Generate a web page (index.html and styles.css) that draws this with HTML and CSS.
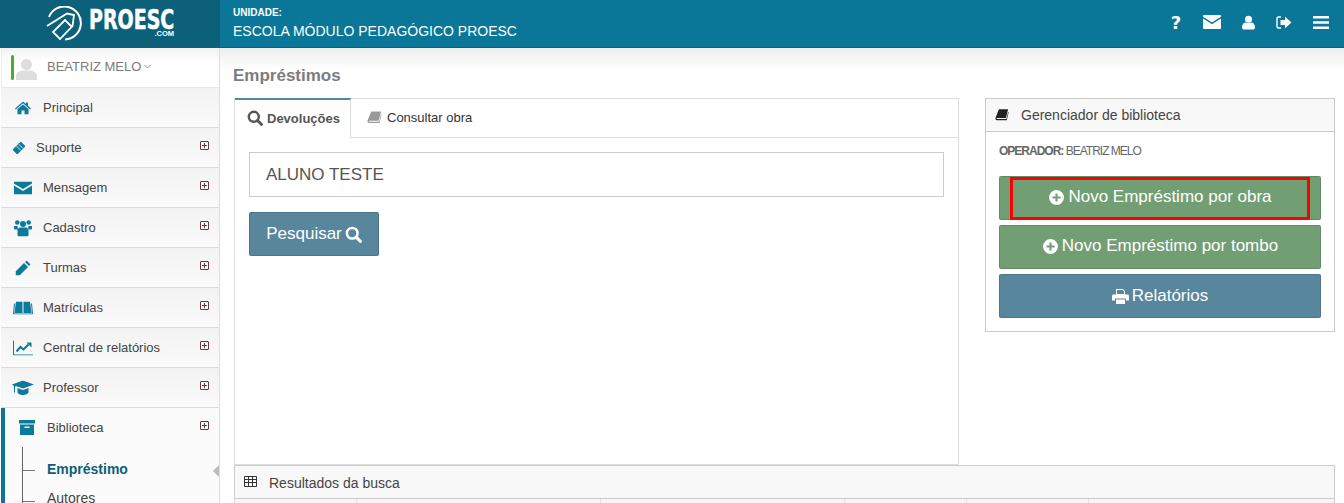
FILE: index.html
```html
<!DOCTYPE html>
<html lang="pt">
<head>
<meta charset="utf-8">
<title>Empréstimos</title>
<link rel="stylesheet" href="styles.css">
</head>
<body>
<svg class="defs" width="0" height="0" aria-hidden="true">
  <symbol id="i-search" viewBox="0 0 16 16"><circle cx="6.8" cy="6.8" r="5" fill="none" stroke="currentColor" stroke-width="2.4"/><path d="M10.5 10.5l4 4" stroke="currentColor" stroke-width="2.8" stroke-linecap="round"/></symbol>
  <symbol id="i-plus" viewBox="0 0 16 16"><path fill-rule="evenodd" d="M8 1a7 7 0 1 1 0 14A7 7 0 0 1 8 1zM7 4.2v2.8H4.2v2H7v2.8h2V9h2.8V7H9V4.2z"/></symbol>
  <symbol id="i-book" viewBox="0 0 16 16"><path d="M4.5 1.5H15l-2.6 10H2.6c-.8 0-1 .9-.3 1h10.600l2.100-8 .6.400-2.200 9H2.200C.8 13.900.2 12.600.6 11.200z"/></symbol>
  <symbol id="i-plusbox" viewBox="0 0 9 9"><path fill="none" stroke="#5c3a3a" d="M1 .5h7c.3 0 .5.200.5.500v7c0 .3-.2.500-.5.500H1C.7 8.500.5 8.300.5 8V1C.5.700.7.500 1 .5zM4.500 2v5M2 4.500h5"/></symbol>
</svg>
<header class="topbar">
  <div class="brand">
    <svg class="logo" viewBox="0 0 36 36" width="36" height="36"><path d="M3 11A16.500 16.500 0 1 1 19 33.500" fill="none" stroke="#fff" stroke-width="2"/><path d="M1 20L21 7.500l7 1.500-1.500 11L14 33l-7-7 12-12 7 7" fill="none" stroke="#fff" stroke-width="1.800"/></svg>
    <div class="wordmark"><span class="wm-main">PROESC</span><span class="wm-sub">.COM</span></div>
  </div>
  <div class="unit">
    <div class="unit-label">UNIDADE:</div>
    <div class="unit-name">ESCOLA MÓDULO PEDAGÓGICO PROESC</div>
  </div>
  <nav class="top-icons">
    <span class="q">?</span>
    <svg width="18" height="14" viewBox="0 0 18 14"><path fill="#fff" d="M1 0h16c.6 0 1 .4 1 1v.8L9 7.600 0 1.800V1c0-.6.4-1 1-1zM0 3.600l9 5.700 9-5.700V13c0 .6-.4 1-1 1H1c-.6 0-1-.4-1-1z"/></svg>
    <svg width="13" height="15" viewBox="0 0 14 15"><circle cx="7" cy="4" r="3.800" fill="#fff"/><path fill="#fff" d="M0 12.500C0 9.500 2 7.500 4 7.500c1 .8 5 .8 6 0 2 0 4 2 4 5 0 1.500-1 2.500-2 2.500H2c-1 0-2-1-2-2.500z"/></svg>
    <svg width="16" height="13" viewBox="0 0 16 13"><path fill="none" stroke="#fff" stroke-width="1.400" d="M5 1H2.500C1.500 1 1 1.600 1 2.500v8c0 .9.500 1.500 1.500 1.500H5"/><path fill="#fff" d="M4.500 4H9V.8l6.500 5.700L9 12.200V9H4.500z"/></svg>
    <svg width="16" height="13" viewBox="0 0 16 13"><path fill="#fff" d="M0 0h16v2.600H0zM0 5.200h16v2.600H0zM0 10.400h16V13H0z"/></svg>
  </nav>
</header>
<div class="shell">
  <aside class="sidebar">
    <div class="user">
      <span class="user-bar"></span>
      <svg class="avatar" width="21" height="21" viewBox="0 0 21 21"><circle cx="10.500" cy="5.500" r="5.500" fill="#ddd"/><path fill="#ddd" d="M0 21v-4c0-3 3-5 6-5.500h9c3 .5 6 2.500 6 5.500v4z"/></svg>
      <span class="user-name">BEATRIZ MELO</span>
      <svg class="chev" width="7" height="5" viewBox="0 0 7 5"><path d="M.5 1l3 3 3-3" fill="none" stroke="#888"/></svg>
    </div>
    <ul class="menu">
      <li class="item"><svg class="mi" width="16" height="13" viewBox="0 0 16 13"><path fill="#0b7a9b" d="M8 0l3 2.600V1h2v3.300l3 2.700-.8.900L8 1.700.8 7.900 0 7zM2.500 7.500L8 3l5.500 4.500V13H9.500V9h-3v4h-4z"/></svg><span>Principal</span></li>
      <li class="item item-narrow"><svg class="mi" width="13" height="13" viewBox="1 1 11 11"><path fill="#0b7a9b" d="M8 1l4 4-7 7-4-4z"/><path stroke="#f6f6f6" stroke-width=".8" d="M4.500 5L8 8.500M6.500 3.500L10 7"/></svg><span>Suporte</span><svg class="plus" width="9" height="9"><use href="#i-plusbox"/></svg></li>
      <li class="item"><svg class="mi" width="18" height="13" viewBox="0 0 18 13"><path fill="#0b7a9b" d="M0 0h18v2L9 7.500 0 2zM0 4l9 5.500L18 4v9H0z"/></svg><span>Mensagem</span><svg class="plus" width="9" height="9"><use href="#i-plusbox"/></svg></li>
      <li class="item"><svg class="mi" width="18" height="17" viewBox="0 0 18 17"><g fill="#0b7a9b"><circle cx="3.300" cy="3" r="2.300"/><circle cx="14.700" cy="3" r="2.300"/><circle cx="9" cy="4.500" r="3"/><path d="M0 6.500h3.500L4 10H1a1 1 0 0 1-1-1zM18 6.500h-3.500L14 10h3a1 1 0 0 0 1-1zM3.500 9.500l2-1.500h7l2 1.500v6c0 .800-.7 1.500-1.500 1.500H5c-.8 0-1.500-.7-1.500-1.500z"/></g></svg><span>Cadastro</span><svg class="plus" width="9" height="9"><use href="#i-plusbox"/></svg></li>
      <li class="item"><svg class="mi" width="15" height="15" viewBox="0 0 15 15"><path fill="#0b7a9b" d="M11 0l4 4-1.500 1.500-4-4zM8.500 2.500l4 4L4 15H0v-4z"/></svg><span>Turmas</span><svg class="plus" width="9" height="9"><use href="#i-plusbox"/></svg></li>
      <li class="item"><svg class="mi" width="20" height="13" viewBox="0 0 20 13"><path fill="#0b7a9b" d="M3 0h6.500v11.500H1.500zM10.500 0H17l1.500 11.500h-8z"/><path fill="none" stroke="#0b7a9b" d="M1.500 2L.5 12.500H19.500L18.500 2"/></svg><span>Matrículas</span><svg class="plus" width="9" height="9"><use href="#i-plusbox"/></svg></li>
      <li class="item"><svg class="mi" width="20" height="15" viewBox="0 0 20 15"><path fill="none" stroke="#0b7a9b" d="M.5 0v14.500H20"/><path fill="none" stroke="#0b7a9b" stroke-width="2" d="M3.500 11l4-4.500 3 2.500 5-5"/><path fill="#0b7a9b" d="M13.500 2h5v5z"/></svg><span>Central de relatórios</span><svg class="plus" width="9" height="9"><use href="#i-plusbox"/></svg></li>
      <li class="item"><svg class="mi" width="22" height="15" viewBox="0 0 22 15"><path fill="#0b7a9b" d="M11 0l11 4-11 4-7-2.500L12 4 3 6v6H2V5.500L0 4zM5.500 7.500L11 9.500l5.500-2v4c0 2-3 3-5.500 3s-5.500-1-5.500-3z"/></svg><span>Professor</span><svg class="plus" width="9" height="9"><use href="#i-plusbox"/></svg></li>
      <li class="item-open">
        <div class="open-row"><svg class="mi-open" width="16" height="15" viewBox="0 0 16 15"><path fill="#0b7a9b" d="M0 0h16v3.500H0zM1 4.500h14V15H1zM5.500 6.500v1.500h5V6.500z"/></svg><span>Biblioteca</span><svg class="plus" width="9" height="9"><use href="#i-plusbox"/></svg></div>
        <ul class="submenu">
          <li class="sub sub-active">Empréstimo</li>
          <li class="sub sub-next">Autores</li>
        </ul>
      </li>
    </ul>
    <span class="caret"></span>
  </aside>
  <main class="content">
    <h1 class="page-title">Empréstimos</h1>
    <div class="columns">
      <section class="tabs">
        <div class="tab-bar">
          <div class="tab tab-active"><svg width="16" height="16"><use href="#i-search"/></svg>Devoluções</div>
          <div class="tab tab-plain"><svg class="tab-book" width="15" height="15" fill="#999"><use href="#i-book"/></svg>Consultar obra</div>
        </div>
        <div class="tab-body">
          <div class="field">ALUNO TESTE</div>
          <button class="btn btn-blue btn-search">Pesquisar <svg width="17" height="17"><use href="#i-search"/></svg></button>
        </div>
      </section>
      <section class="panel">
        <div class="panel-head"><svg width="14" height="14" fill="#222"><use href="#i-book"/></svg><span>Gerenciador de biblioteca</span></div>
        <div class="panel-body">
          <p class="operator"><b>OPERADOR:</b> BEATRIZ MELO</p>
          <div class="btn-stack">
            <button class="btn btn-green"><svg width="17" height="17" fill="#fff"><use href="#i-plus"/></svg> Novo Empréstimo por obra<span class="highlight"></span></button>
            <button class="btn btn-green"><svg width="17" height="17" fill="#fff"><use href="#i-plus"/></svg> Novo Empréstimo por tombo</button>
            <button class="btn btn-blue"><svg width="17" height="15" viewBox="0 0 17 15"><path fill="#fff" d="M4 0h7l2 2v3.500H4zM5 1v4h7V2.500L10.500 1zM1.500 5.500h14c.8 0 1.500.7 1.500 1.500v4.500h-3V9.500H3v2H0V7c0-.8.700-1.500 1.500-1.500zM4 10.500h9V15H4z"/></svg> Relatórios</button>
          </div>
        </div>
      </section>
    </div>
    <section class="results">
      <div class="results-head"><svg width="13" height="11" viewBox="0 0 13 11"><path fill="none" stroke="#333" d="M.5.500h12v10H.5zM.5 3.500h12M.5 6.500h12M4.500.500v10M8.500.500v10"/></svg><span>Resultados da busca</span></div>
      <div class="results-cols"><i class="c1"></i><i class="c2"></i><i class="c2"></i><i class="c1"></i><i class="c1"></i><i class="c3"></i></div>
    </section>
  </main>
</div>
</body>
</html>
```
FILE: styles.css
```css
* { box-sizing: border-box; }
html, body { margin: 0; height: 503px; overflow: hidden; }
body { font-family: "Liberation Sans", Arial, sans-serif; color: #333; background: #fff; font-size: 14px; }
.defs { position: absolute; }
ul { list-style: none; margin: 0; padding: 0; }
.topbar { display: flex; height: 48px; background: #0a7698; color: #fff; border-bottom: 1px solid #0a5f78; }
.brand { width: 220px; height: 47px; background: #0c6079; display: flex; align-items: center; gap: 7px; padding-left: 46px; flex: none; }
.logo { flex: none; }
.wordmark { display: flex; flex-direction: column; align-items: flex-end; width: 85px; height: 28px; }
.wm-main { font-family: "DejaVu Sans", sans-serif; font-weight: 700; font-size: 26px; line-height: 20px; height: 20px; width: 85px; white-space: nowrap; transform: scaleX(.73); transform-origin: left; -webkit-text-stroke: .6px #fff; }
.wm-sub { font-size: 7.5px; line-height: 8px; font-weight: 700; }
.unit { padding: 7px 0 0 13px; flex: 1; }
.unit-label { font-size: 10px; font-weight: 700; line-height: 11px; }
.unit-name { font-size: 14px; line-height: 18px; margin-top: 4px; }
.top-icons { display: flex; align-items: center; gap: 21px; padding-right: 15px; height: 44px; }
.q { font-size: 18px; font-weight: 700; width: 10px; margin-right: 1px; padding-top: 1px; font-family: "DejaVu Sans", sans-serif; text-align: center; line-height: 1; display: flex; justify-content: center; }
.shell { display: flex; height: 455px; }
.sidebar { position: relative; width: 220px; flex: none; border-right: 1px solid #ddd; overflow: hidden; padding-left: 1px; background: #fff; }
.user { height: 40px; display: flex; align-items: center; padding-left: 9px; color: #7c7c7c; border-bottom: 1px solid #e6e6e6; border-left: 1px solid #eee; background: linear-gradient(#f2f2f2, #fff 35%); font-size: 13px; }
.user-bar { width: 3px; height: 25px; background: #4caa2f; border-radius: 2px; margin: -1px 2px 0 0; }
.avatar { margin: 4px 10px 0 0; }
.user-name { margin: 0 3px 3px 0; }
.chev { margin-bottom: 3px; }
.item { position: relative; height: 40px; display: flex; align-items: center; padding-left: 14px; border-bottom: 1px solid #ddd; background: linear-gradient(#f3f3f3, #fafafa); color: #444; font-size: 13px; }
.item .mi { position: absolute; left: 22px; top: 50%; transform: translate(-50%, -50%); }
.item > span { margin-left: 28px; }
.item-narrow > span { margin-left: 21px; }
.item-narrow .mi { left: 18px; }
.plus { position: absolute; right: 10px; top: 13px; }
.item-open { border-left: 4px solid #0a7698; background: #fbfbfb; color: #444; font-size: 13px; }
.open-row { height: 39px; position: relative; display: flex; align-items: center; }
.mi-open { margin-left: 14px; }
.open-row span { margin-left: 12px; }
.submenu { margin-left: 17px; border-left: 1px solid #666; height: 60px; font-size: 14px; }
.sub { height: 29px; line-height: 29px; padding-left: 24px; position: relative; color: #444; }
.sub::before { content: ""; position: absolute; left: 0; top: 20px; width: 12px; height: 1px; background: #777; }
.sub-active { font-weight: 700; color: #0c5f78; height: 33px; padding-top: 8px; }
.sub-active::before { top: 23px; }
.sub-next { line-height: 36px; }
.sub-next::before { top: 21px; }
.caret { position: absolute; right: 0; top: 417px; border-style: solid; border-width: 6.500px 6px 6.500px 0; border-color: transparent #bbb transparent transparent; }
.content { flex: 1; min-width: 0; position: relative; padding: 0 9px 0 13px; background: linear-gradient(#eee, #fff 22px); }
.page-title { margin: 0; height: 50px; font-size: 17px; font-weight: 700; color: #7c7c7c; padding-top: 18px; line-height: 20px; }
.columns { display: flex; justify-content: space-between; padding-left: 1px; align-items: flex-start; }
.tabs { width: 725px; height: 367px; border: 1px solid #ddd; border-top: 0; background: #fff; }
.tab-bar { display: flex; height: 40px; border-bottom: 1px solid #ddd; border-top: 1px solid #ddd; }
.tab { display: flex; align-items: center; gap: 4px; padding: 0 12px 0 16px; font-size: 13px; color: #333; }
.tab svg { flex: none; }
.tab-plain { padding-bottom: 2px; }
.tab-active { width: 116px; margin-top: -1px; height: 40px; background: #fff; border-top: 2px solid #58869c; border-right: 1px solid #ddd; padding: 0 0 2px 12px; color: #555; font-weight: 700; gap: 4px; }
.tab-book { margin-right: 1px; }
.tab-body { padding: 14px 14px 0; }
.field { height: 45px; border: 1px solid #ccc; padding-left: 16px; line-height: 43px; font-size: 17px; color: #555; }
.btn { font-family: inherit; display: flex; align-items: center; justify-content: center; gap: 3px; position: relative; border: 1px solid rgba(0,0,0,.12); border-radius: 2px; color: #fff; font-size: 17px; height: 44px; width: 100%; padding: 0; }
.btn-blue { background: #58869c; }
.btn-green { background: #729e73; padding-bottom: 2px; }
.btn-search { margin-top: 15px; width: 130px; }
.panel { width: 350px; height: 234px; border: 1px solid #ccc; background: #fff; }
.panel-head { height: 33px; border-bottom: 1px solid #ccc; background: #f8f8f8; display: flex; align-items: center; padding-left: 9px; font-size: 14px; color: #444; }
.panel-head span { margin-left: 12px; }
.panel-body { padding: 0 13px; }
.operator { margin: 0; height: 44px; padding-top: 12px; font-size: 12px; line-height: 14px; color: #666; letter-spacing: -1px; }
.btn-stack { display: flex; flex-direction: column; gap: 5px; }
.highlight { position: absolute; left: 10px; top: 0; width: 300px; height: 43px; border: 3px solid #f00; }
.results { position: absolute; left: 14px; right: 9px; top: 417px; height: 38px; background: #fff; }
.results-head { height: 34px; display: flex; align-items: center; padding: 1px 0 0 9px; background: #f8f8f8; border: 1px solid #ccc; font-size: 14px; color: #444; }
.results-head svg { margin-top: -3px; }
.results-head span { margin-left: 12px; }
.results-cols { display: flex; height: 4px; background: #f6f6f6; border-left: 1px solid #ddd; border-right: 1px solid #ccc; }
.results-cols i { border-right: 1px solid #ddd; display: block; flex: none; }
.c1 { width: 122px; }
.c2 { width: 244px; }
.results-cols .c3 { flex: 1; border-right: 0; }
```
